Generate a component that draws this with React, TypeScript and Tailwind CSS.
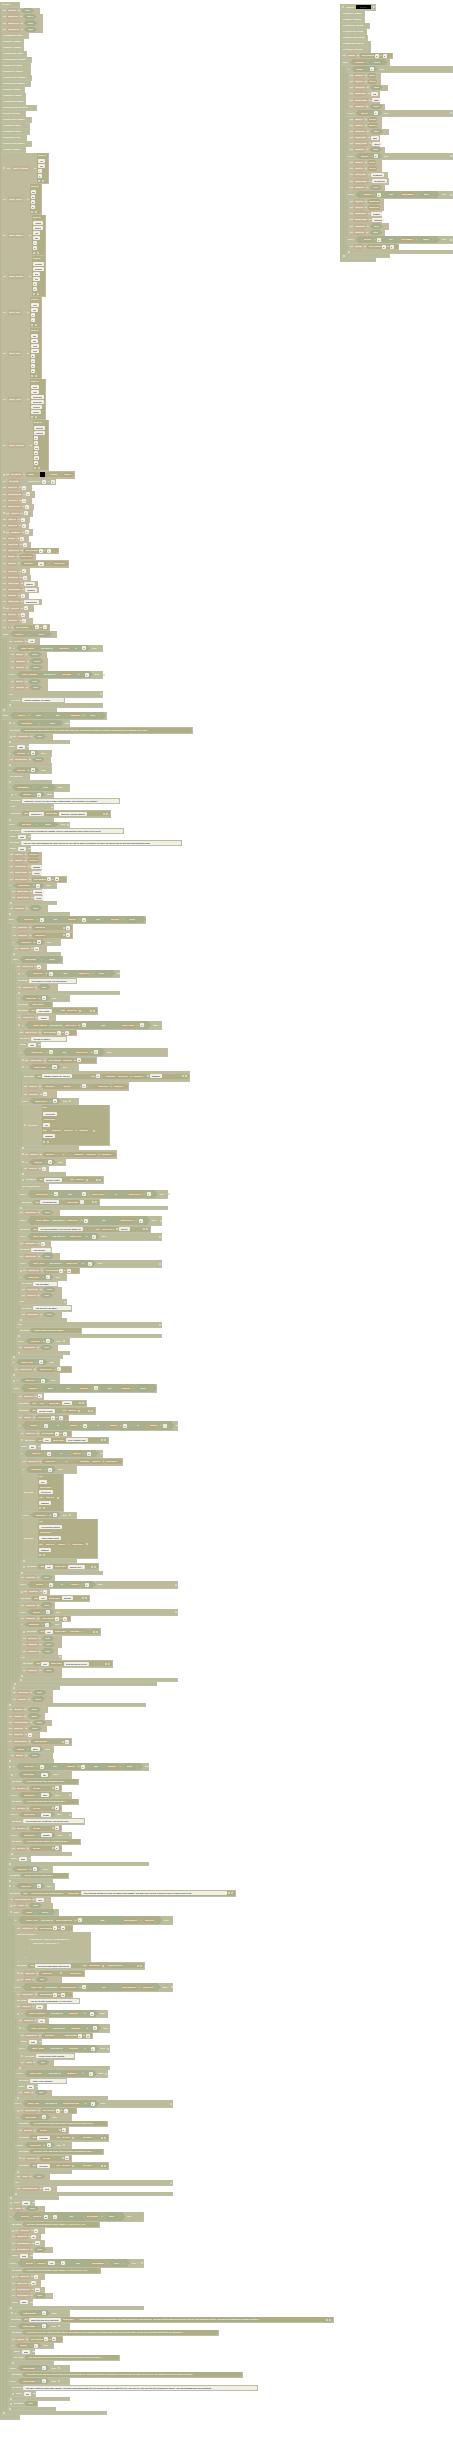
import React from "react";

/* One block per line: top, left, right, then the block's parts.
   [x] variable menu   (x) reporter   {x} editable field   "x" text reporter
   ‹ › condition       « » operator   ~ stretch            A<n> stacked value list */
const MAIN = `
2 0 20 on start
8 1 40 set [finalHIT] to ‹true›
14 1 43 set [deadHero] to ‹false›
20 1 43 set [startedHIT] to ‹false›
27 1 43 set [finalHERO] to ‹false›
33 1 29 let mobname: string
39 1 24 let mobXP: number
45 1 24 let mobHP: number
51 1 27 let mobNAME: string
57 1 32 let mobChance: number
63 1 31 let playerATT: string
69 1 31 let playerXP: number
75 1 32 let playerATTK: number
81 1 31 let playerRUN: number
87 1 25 let mobID: number
93 1 26 let mobDIE: number
99 1 26 let mobFLEE: number
105 1 37 let playerRestKeep: string
111 1 26 let ITEM: boolean
117 1 32 let playerRest: number
123 1 30 let forgive1: string
129 1 30 let forgive2: string
135 1 27 let MaxDance: any
141 1 32 let playerLast: number
147 1 26 let BigHIT: number
153 1 49 A37 - set [player_confirm] ~ to|array of|{Yes}|{yes}|{Y}|{y}|- +
184 1 42 A30 set [player_deny] ~ to|array of|{No}|{no}|{N}|{n}|- +
215 1 46 A32 set [player_attack] ~ to|array of|{Attack}|{attack}|{Atk}|{atk}|{A}|{a}|- +
256 1 46 A32 set [player_defend] ~ to|array of|{Defend}|{defend}|{Def}|{def}|{D}|{d}|- +
297 1 42 A30 set [player_flee] ~ to|array of|{Flee}|{flee}|{F}|{f}|- +
328 1 42 A30 set [player_eat] ~ to|array of|{Eat}|{eat}|{Heal}|{heal}|{E}|{e}|{H}|{h}|- +
379 1 46 A30 set [player_rest] ~ to|array of|{Rest}|{rest}|{Scavenge}|{scavenge}|{Search}|{search}|- +
420 1 49 A33 set [player_explore] ~ to|array of|{Explore}|{explore}|{X}|{x}|{Go}|{go}|{On}|{on}|- +
471 1 75 - set [my_sprite] to «* sprite ~ ■ ~ of kind ~ (Player)»
479 1 56 P set [my_sprite] ~ position to x {0} y {0}
485 1 32 set [playerXP] to {0}
491 1 35 set [playerMaxHP] to {0}
498 1 32 set [playerHP] to {0}
504 1 34 set [playerATTK] to {1}
510 1 33 - set [mobXP] to {0}
517 1 30 set [mobHP] to {0}
523 1 29 set [mobATT] to {1}
529 1 33 - set [mobDEF] to {0}
536 1 29 set [mobID] to {0}
542 1 31 set [mobFLEE] to {1}
548 1 59 set [mobDANC] to «* pick random {0} to {4}»
554 1 36 set [mobID] to (mobDANC)
560 1 69 set [mobHP] to «* (intensity) ~ {1.5} ~ × ~ (mobDANC)»
568 1 30 set [turnsHIT] to {0}
575 1 31 set [turnsRUN] to {0}
581 1 38 set [mobNAME] to {Zombie}
587 1 39 set [mobNAMES] to {Zombies}
593 1 29 set [mobDIE] to {1}
599 1 42 set [mobNAME] to {placeholder}
605 1 34 - set [turnHIT] to {0}
612 1 29 set [timeHIT] to {0}
618 1 33 set [mobRUN] to {0}
624 1 50 set [i] to «* pick random ~ {0} to {4}»
631 1 57 while ‹42 (finalHIT) = ‹false› ›
638 7 40 set [decision] to {Yes}
645 7 103 - if ‹74 (player_deny) find index of (decision) ≥ {0} › then
652 9 47 set [BigHIT] to ‹false›
658 9 48 set [BigWord] to ‹false›
665 9 48 set [finalHIT] to ‹false›
671 7 103 else if ‹76 (player_confirm) find index of (decision) ≥ {0} › then ~ +
679 9 48 set [BigHIT] to ‹true›
685 9 48 set [finalHIT] to ‹true›
691 7 103 else ~ +
698 9 65 say string {*Invalid response, try again.}
703 7 103 .
708 1 57 .
712 1 107 while ‹96 ‹(BigHIT) = ‹false› › and ‹(BigStory) ≠ ‹true› › ›
720 7 70 - if ‹47 (failedIntro) = ‹false› › then
727 8 193 say string "*You are alone with nowhere to call a small town with little light and the sounds of creatures surrounding you. Nothing is the best."
734 8 53 - set [failedIntro] to ‹true›
740 7 70 .
744 7 29 pause {2000} ms
750 7 52 if ‹(BPText) ≥ {30}› then
757 8 51 set [BPItemFind] to ‹true›
763 7 52 .
767 7 52 if ‹(BPText) ≥ {30}› then
774 8 30 call newGold
780 7 52 .
784 7 70 if ‹44 (BPItemBuy) = ‹false› › then
792 9 54 - if ‹(mobXP) > {0}› then
798 9 120 say string {*Suddenly, a voice yell out of some village nearby. They appears very danger!}
804 9 54 else ~ +
810 9 111 say string «* join {Suddenly, a} (mobNAME) {appears, looking danger!} ~ - + »
818 7 54 .
822 7 70 else if ‹42 (hereText) = ‹false› › then +
828 8 124 say string {*As you travel through the swamp, you see light moving from a cabin in the forest.}
834 8 31 pause {3000} ms
840 8 182 say string {*You see little flash towards the light, only to be very late to notice it from the fire tenly, as you are too far too busy and a thunder god!}
846 8 31 pause {3000} ms
852 8 42 set [mobXP] to (forestXP)
858 8 42 set [mobHP] to (forestHP)
864 8 42 set [mobNAME] to {Swamp}
870 8 41 set [mobNAMES] to {Slime}
876 8 67 set [turnChance] to «* pick random {0} to {10}»
883 8 57 if ‹(turnChance) ≥ {9}› then
889 10 42 set [mobNAME] to {Swamp}
895 10 43 set [mobNAMES] to {Slime}
901 8 57 .
905 8 48 set [hereText] to ‹true›
912 7 70 .
916 7 146 while ‹130 ‹(playerHP) > {0}› and ‹(mobHP) > {0}› and ‹(finished) = ‹false› › ›
924 11 73 set [mobTurn] to «* (mobTurn) ~ + {1}»
932 11 73 set [mobTurn] to «* (mobTurn) ~ + {1}»
939 11 61 if ‹(mobTurn) ≥ {10}› then
946 13 47 set [mobTurn] to {10}
952 11 61 .
956 11 63 while ‹43 (playerRUN) = ‹false› ›
964 15 47 set [playerATT] to {0}
970 16 120 - if ‹90 ‹(playerXP) ≥ {0}› and ‹(startHero) = ‹false› › › then
978 16 77 say string {*The slimes lie beside you and shout!}
984 16 58 set [startHero] to ‹true›
991 16 120 .
995 16 70 if ‹(playerHP) ≥ {0}› then
1002 16 53 say string "*What now?"
1007 16 98 say string «* join {Your Health:} ~ join (playerHP) + ~ - + »
1015 16 56 set [playerATT] to {Attack}
1021 16 162 - if ‹126 ‹(player_attack) find index of (playerATT) ≥ {0}› and ‹(playerATTK) > {0}› › then
1030 18 77 set [playerATTK] to «* pick random {0} to {3}»
1036 18 67 say string {*Rolling for attack…}
1042 18 41 pause {1000} ms
1048 18 168 if ‹82 ‹(playerATTK) > {0}› and ‹(playerATTK) ≤ {6}› › then
1057 20 97 - set [playerATTK] to «* pick random (mobTurn) to {10}»
1064 20 79 - if ‹(playerATTK) = {10}› then
1071 22 190 say string «* join {Wham! Critical Hit! You did} ~ join {2} × «(intensity) (playerHP) - (mobDEF)» + {damage!} ~ - + »
1082 22 129 set [mobHP] to «* (intensity) ~ (mobHP) ~ - {2} × ~ «(playerHP) - (mobDEF)» »
1091 22 57 set [mobTurn] to {0}
1098 20 79 else if ‹(playerATTK) > {10}› then +
1105 22 110 A42 - say string|join|{You hit the}|(mobNAME)|{for}|join «(intensity) (playerHP) - (mobDEF)» +|{damage!}|- +
1146 20 79 .
1150 20 117 - set [mobHP] to «* (mobHP) ~ - ~ «(intensity) (playerHP) - (mobDEF)» »
1159 20 66 - if ‹(mobHP) < {0}› then
1166 22 49 set [mobHP] to {0}
1172 20 66 .
1176 20 104 - say string «* join {Enemy Health:} ~ join (mobHP) + ~ - + »
1184 20 49 call checkplayerXP
1190 18 168 else if ‹130 ‹(playerATTK) > {3}› and ‹{0} < (playerATTK)› or ‹(playerATTK) = {1}› › then ~ +
1199 20 100 say string «* join {You missed the} ~ (mobNAME) {…} ~ - + »
1206 18 168 .
1210 18 60 set [playerRUN] to ‹true›
1216 18 162 else if ‹122 ‹(player_attack) find index of (playerATT) ≥ {0}› and ‹(playerATTK) = {0}› › then ~ +
1226 18 151 say string «* join {You can not attack! You can only attack for} ~ join (playerATTK) + {turn(s)!} ~ - + »
1233 18 162 else if ‹72 (player_defend) find index of (playerATT) ≥ {0}› then ~ +
1241 18 51 set [playerDEF] to {3}
1247 18 52 say string {*You defend!}
1253 18 60 set [playerRUN] to ‹true›
1260 18 162 else if ‹68 (player_flee) find index of (playerATT) ≥ {0}› then ~ +
1268 18 80 - set [playerRUN] to «* pick random {0} to {10}»
1274 18 67 if ‹(playerRUN) > {7}› then
1281 20 58 say string {*You ran away!}
1287 20 62 set [playerRUN] to ‹true›
1293 20 62 set [finished] to ‹true›
1299 18 67 else ~ +
1305 20 72 say string {*You failed to run away…}
1312 20 62 set [playerRUN] to ‹true›
1318 18 67 .
1322 16 162 else ~ +
1328 18 82 say string "*Invalid input! Please try again."
1334 16 162 .
1338 16 70 else if ‹(playerHP) ≤ {0}› then +
1345 17 58 set [playerRUN] to ‹true›
1351 16 70 .
1355 11 63 .
1359 11 60 if ‹(playerATTK) > {0}› then
1366 13 72 set [playerATTK] to «* (playerATTK) - {1}»
1373 11 60 .
1378 11 60 - if ‹(playerHP) > {0}› then
1384 12 157 while ‹136 ‹(mobHIT) = ‹false› › and ‹(mobHP) > {0}› and ‹(finished) = ‹false› › ›
1393 17 44 set [mobATT] to {0}
1400 17 87 say string «* join "The" (mobNAME) {'s turn!} ~ - + »
1407 17 96 say string «* join {Enemy Health:} ~ join (mobHP) + ~ - + »
1415 17 69 set [mobID] to «* pick random {0} to {6}»
1421 17 178 if ‹152 ‹(mobID) = {1}› or ‹(mobID) = {2}› or ‹(mobID) = {3}› or ‹(mobID) = {4}› › then
1431 19 72 set [mobATT] to «* pick random {0} to {6}»
1437 19 109 - say string «* join {The} (mobNAME) {tries to attack you!} ~ - + »
1444 19 41 pause {500} ms
1450 19 103 if ‹74 ‹(mobATT) > {0}› or ‹(mobHIT) < {0}› › then
1458 21 123 set [playerHP] to «* (playerHP) ~ - ~ «(intensity) (mobHP) - (playerDEF)» »
1466 21 77 if ‹(playerDEF) > {0}› then
1474 22 64 A38 say string|join|{The}|(mobNAME)|{hit you for}|join (mobHP) +|{damage!}|- +
1512 21 77 else if ‹(playerDEF) ≥ {0}› then +
1519 22 98 A38 say string|join|{You defend from the}|(mobNAME)|{, only letting it deal}|join (mobHP) (integer) × (playerDEF) +|{damage!}|- +
1559 21 77 .
1563 21 99 - say string «* join {The} (mobNAME) {missed you…} ~ - + »
1571 19 103 .
1575 19 55 set [mobRUN] to ‹true›
1581 18 178 else if ‹68 ‹(mobID) = {5}› or ‹(mobID) = {6}› › then ~ +
1589 19 50 - set [mobDEF] to {3}
1595 19 90 say string «* join {The} (mobNAME) {defends} ~ - + »
1602 19 55 set [mobRUN] to ‹true›
1609 18 178 else if ‹(mobID) = {7}› then ~ +
1616 19 71 set [mobRUN] to «* pick random {0} to {6}»
1622 19 62 if ‹(mobRUN) > {4}› then
1628 21 101 - say string «* join {The} (mobNAME) "ran away…" ~ - + »
1636 21 62 set [finished] to ‹true›
1642 21 62 set [mobRUN] to ‹true›
1648 21 58 set [mobflee] to ‹true›
1655 19 62 else ~ +
1660 21 113 say string «* join {The} (mobNAME) {tried and failed to flee!} ~ - + »
1668 21 62 set [mobRUN] to ‹true›
1674 19 62 .
1678 18 178 .
1682 12 157 .
1686 11 60 .
1690 11 53 set [playerHIT] to ‹false›
1696 11 53 set [mobHIT] to ‹false›
1703 7 146 .
1707 7 48 set [finished] to ‹false›
1713 7 45 set [mobflee] to ‹false›
1720 7 52 set [mobHideStart] to ‹false›
1726 7 47 set [mobRUN] to ‹false›
1732 7 40 set [mobTurn] to {0}
1738 7 72 set [battleRound] to «* (battleRound) ~ + {1}»
1746 7 54 if ‹(mobID) = {Boss} › then
1753 9 53 set [BigHIT] to ‹true›
1759 7 54 .
1763 7 149 - if ‹127 ‹(playerHP) > {0}› and ‹(mobHP) ≤ {0}› and ‹(mobflee) = ‹false› › › then
1771 9 72 - if ‹(mobNAME) = {bat}› then
1779 10 79 say string "*You defeated the bat! You gained 5 BP!"
1785 10 62 set [BPText] to «* (BPText) ~ + {5}»
1792 9 72 else if ‹(mobNAME) = {Wolf}› then ~ +
1799 10 79 say string "*You defeated the wolf! You gained 5 BP!"
1805 10 62 set [BPText] to «* (BPText) ~ + {5}»
1812 9 72 else if ‹(mobNAME) = {scrawl}› then ~ +
1818 10 85 say string {*You defeated the scrawling! You gained 5 BP!}
1825 10 62 set [BPText] to «* (BPText) ~ + {5}»
1832 9 72 else if ‹(mobNAME) = {zombie}› then ~ +
1839 10 81 say string "*You defeated the zombie! You gained 5 BP!"
1845 10 62 set [BPText] to «* (BPText) ~ + {5}»
1852 9 72 .
1856 9 31 pause {2000} ms
1862 7 149 .
1866 7 53 if ‹(playerHP) ≤ {0}› then
1873 8 69 say string "*You are dead! Try again later!"
1879 7 53 .
1883 7 55 - if ‹(playerHP) > {0}› then
1890 8 236 say string «* join "You are tired your enemies with a" (mobNAME) {*, you rest and eat and feel tired by today in the swamp. You may rest in a bed, search for food, or gain sleep for BP.} - + »
1897 8 51 set [playerRestKeep] to {Rest}
1903 8 53 - set [ITEM] to ‹false›
1909 8 59 - while ‹(ITEM) = ‹false› ›
1916 13 173 if ‹144 ‹(player_rest) find index of (playerRestKeep) ≥ {0}› and ‹(playerMaxHP) > (playerHP)› › then
1925 15 73 set [playerRest] to «* pick random {0} to {10}»
1932 15 91 #
1962 15 145 say string «* join {You slept comfortably and healed} ~ join (playerRest) + "health back to!" ~ - + »
1970 15 85 - set [playerHP] to «* (playerHP) ~ + ~ (playerRest)»
1977 15 62 - set [ITEM] to ‹true›
1983 13 173 else if ‹138 ‹(player_rest) find index of (playerRestKeep) ≥ {0}› and ‹(playerMaxHP) = (playerHP)› › then ~ +
1992 15 73 set [playerRest] to «* pick random {0} to {10}»
1998 15 80 say string {*You are already at maximum! Are you sure?}
2004 15 47 set [forgive1] to {Yes}
2010 15 108 - if ‹74 (player_confirm) find index of (forgive1) ≥ {0}› then
2018 17 49 set [forgive2] to {Yes}
2024 17 110 - if ‹75 (player_confirm) find index of (forgive2) ≥ {0}› then
2033 19 93 set [MaxDance] to «* (intensity) ~ pick random {0} to {10}»
2039 19 42 pause {1000} ms
2045 17 110 else if ‹72 (player_deny) find index of (forgive2) ≥ {0}› then +
2053 19 75 - say string {*Please decide with confirm.}
2060 19 54 set [ITEM] to ‹true›
2066 17 110 .
2070 15 108 else if ‹72 (player_deny) find index of (forgive1) ≥ {0}› then +
2078 17 67 say string {*Okay! Let's continue.}
2084 17 38 pause {500} ms
2090 17 52 set [ITEM] to ‹true›
2096 15 108 .
2100 13 173 else if ‹76 (player_rest) find index of (playerRestKeep) ≥ {0}› then ~ +
2108 15 77 - set [playerLast] to «* pick random {0} to {7}»
2114 15 72 if ‹(playerLast) > {3}› then
2121 17 108 say string "*You scavenged around and found enough food to gain a 5 BP!"
2127 17 69 set [BPText] to «* (BPText) ~ + {5}»
2134 17 109 say string «* join {You have} ~ join (BPText) + ~ "BP total." ~ - + »
2142 15 72 else if ‹(playerLast) ≤ {3}› then +
2149 17 104 say string "*You were lucky and found a piece of food, you gained 10 BP!"
2155 17 72 - set [BPText] to «* (BPText) ~ + {10}»
2162 17 109 say string «* join {You have} ~ join (BPText) + ~ "BP total." ~ - + »
2170 15 72 .
2174 15 50 set [ITEM] to ‹true›
2180 13 173 else ~ +
2186 15 57 set [playerRestKeep] to {Rest}
2192 13 173 .
2196 8 59 .
2200 8 35 - pause {1000} ms
2206 8 45 set [ITEM] to ‹false›
2212 8 144 if ‹112 ‹(BPText) (integer) {20} = {0}› and ‹(BPItemBuy) = ‹false› › › then
2222 10 100 say string "*You have achieved Boots Gold to Attack 1+1 =30 HP & 2 = 10!"
2228 10 45 - set [playerXP] to {5}
2234 10 41 set [playerHP] to {30}
2240 10 45 set [playerMaxHP] to {30}
2247 10 53 set [BPItemBuy] to ‹true›
2253 10 33 pause {3000} ms
2259 8 144 else if ‹112 ‹(BPText) (integer) {100} = {0}› and ‹(BPItemBuy) = ‹true› › › then ~ +
2268 10 101 say string "*You have achieved Boots Gold to Attack 1+1 =30 HP & 3+2 = 10!"
2274 10 45 - set [playerXP] to {9}
2280 10 41 set [playerHP] to {50}
2287 10 45 set [playerMaxHP] to {50}
2293 10 53 set [BPItemBuy] to ‹true›
2299 10 33 pause {3000} ms
2306 8 144 .
2310 9 70 - if ‹(battleRound) = {1}› then
2317 9 334 say string «* join {When the sun feels light with} (mobNAME) "*, you look around at your surroundings. It is a dark forest with eyes behind it. You find yourself with one trail you need to come out above ahead. You begin by heading to a certain direction." - + »
2323 8 70 else if ‹(battleRound) = {3}› then +
2330 10 219 say string "*You begin to feel the light out of the places. The number of one can wander by hungry and losing a trail in the other, you do the trick and not to get to the darkness…"
2336 10 63 set [BigRN] to «* pick random {0} to {10}»
2343 10 54 if ‹(BigRN) > {5}› then
2349 12 35 pause {3000} ms
2355 12 120 say string "*You hear a of you see one in the whole way going through out to the places…"
2361 10 54 .
2365 8 70 else if ‹(battleRound) = {6}› then +
2372 10 243 say string "*You begin to feel stronger as you travel through these travels. You don't know why you wish on a rush and dare to return, but you do. The continue on with the trips of sorrow."
2378 8 70 else if ‹(battleRound) = {9}› then +
2385 10 258 say string {*You have reached a dark town cabinet. You don't understand what they are saying or when or what they are, but you feel you can hear the scraping the moon. You find inhuman dark deep pointing.}
2391 10 36 - pause {500} ms
2397 8 70 .
2401 8 38 - say string "*end"
2407 7 56 .
2411 1 107 .
2415 0 20 .
2420 0 0 .
`;

const SIDE = `
4 0 36 - function ▬ +
11 1 25 let mobHIT: number
17 1 25 let mobXP: number
23 1 30 let mobRUN: boolean
29 1 27 let mobNAME: string
35 1 28 let mobNAMES: string
41 1 31 let mobHIDE: boolean
47 1 31 let mobflee: boolean
53 1 53 set [mobID] to «* pick random {0} to {3}»
59 1 50 while ‹38 (finished) = ‹false› ›
66 6 113 if ‹(mobID) = {0}› then
73 8 41 set [mobXP] to (batXP)
79 8 41 set [mobHP] to (batHP)
85 8 48 set [mobHIDE] to ‹false›
91 8 40 set [mobNAME] to {bat}
97 8 40 set [mobNAMES] to {Bats}
104 8 45 set [mobRUN] to ‹false›
110 6 113 else if ‹(mobID) = {1}› then ~ +
117 8 42 set [mobXP] to (wolfXP)
123 8 42 set [mobHP] to (wolfHP)
129 8 49 set [mobHIDE] to ‹false›
135 8 40 set [mobNAME] to {Wolf}
141 8 40 set [mobNAMES] to {Wolfs}
147 8 45 set [mobRUN] to ‹true›
153 6 113 else if ‹(mobID) = {2}› then ~ +
160 8 42 set [mobXP] to (scrXP)
166 8 42 set [mobHP] to (scrHP)
172 8 48 set [mobNAME] to {scrawling}
178 8 49 set [mobNAMES] to {Scrawlings}
185 8 45 set [mobRUN] to ‹true›
191 6 113 else if ‹84 ‹(mobID) = {3}› and ‹(BPItemBuy) = ‹true› › › then ~ +
199 8 44 set [mobXP] to (zombieXP)
205 8 44 set [mobHP] to (zombieHP)
211 8 42 set [mobNAME] to {zombie}
217 8 42 set [mobNAMES] to {Zombies}
223 8 49 set [mobHIDE] to ‹true›
230 8 45 set [mobRUN] to ‹true›
236 6 113 else if ‹84 ‹(mobID) = {3}› and ‹(BPItemBuy) = ‹false› › › then ~ +
244 8 59 set [mobID] to «* pick random {0} to {3}»
250 6 113 .
254 1 50 .
258 0 36 .
262 0 0 .
`;

const COMMENT = [
  ["pl-0", "function run(more) {"],
  ["pl-3", "if (playerRest + playerHP > playerMaxHP) {"],
  ["pl-4", "playerRest = playerRest - 1"],
  ["pl-3", "}"],
  ["pl-0", ""],
  ["pl-2", "}"],
];

const TOKEN =
  /"[^"]*"|\{[^}]*\}|\[[^\]]*\]|\([^)]*\)|‹\d*|›|«\*?|»|[^\s"{}[\]()‹›«»]+/g;

const HEX =
  "[clip-path:polygon(3px_0,calc(100%-3px)_0,100%_50%,calc(100%-3px)_100%,3px_100%,0_50%)]";

function Menu({ name, tone }: { name: string; tone: string }) {
  return (
    <span className={`flex h-[5px] shrink-0 items-center ${tone}`}>
      <select
        aria-label={name}
        className="field-sizing-content h-[3px] appearance-none bg-transparent p-0 leading-[3px]"
      >
        <option>{name}</option>
      </select>
      <span className="leading-[3px]">▾</span>
    </span>
  );
}

function Field({ value, grow }: { value: string; grow: boolean }) {
  return (
    <input
      aria-label="value"
      defaultValue={value}
      className={`field-sizing-content h-[4px] min-w-[4px] rounded-[1px] bg-[#f1efe6] py-0 leading-[4px] text-[#3f4670] ${
        grow ? "flex-1" : "shrink-0"
      } ${value.length > 2 ? "px-[2px]" : "px-[1px]"}`}
    />
  );
}

function parse(tokens: string[], depth: number): React.ReactNode[] {
  const out: React.ReactNode[] = [];
  let key = 0;
  while (tokens.length) {
    const t = tokens.shift() as string;
    key += 1;
    if (t === "›" || t === "»") return out;
    if (t[0] === "‹") {
      const width = t.length > 1 ? Number(t.slice(1)) : undefined;
      const wordy = /^(true|false)$/.test(tokens[0]);
      const inner = wordy ? null : parse(tokens, depth + 1);
      let word = "";
      if (wordy) {
        word = tokens.shift() as string;
        tokens.shift();
      }
      out.push(
        <span
          key={key}
          style={width ? { width } : undefined}
          className={`flex shrink-0 items-center justify-between gap-[2px] self-stretch ${HEX} ${
            wordy ? "bg-[#a6ae8b] px-[4px]" : depth ? "bg-[#adb18a] px-[3px]" : "bg-[#a8af8c] px-[4px]"
          }`}
        >
          {wordy ? <Menu name={word} tone="" /> : inner}
        </span>,
      );
    } else if (t[0] === "«") {
      const grow = t === "«*";
      out.push(
        <span
          key={key}
          className={`flex h-[5px] items-center gap-[1px] rounded-[2px] border-x border-[#b8a587] bg-[#b1af88] px-[1px] ${
            grow ? "flex-1" : "shrink-0"
          }`}
        >
          {parse(tokens, depth + 1)}
        </span>,
      );
    } else if (t[0] === "{") {
      const raw = t.slice(1, -1);
      const grow = raw[0] === "*";
      out.push(<Field key={key} value={grow ? raw.slice(1) : raw} grow={grow} />);
    } else if (t[0] === "[") {
      out.push(
        <Menu key={key} name={t.slice(1, -1)} tone="rounded-[1px] border border-[#c3ac92] bg-[#bdb896]" />,
      );
    } else if (t[0] === "(") {
      out.push(
        <Menu key={key} name={t.slice(1, -1)} tone="rounded-[2px] border border-[#b6a682] bg-[#b1ab82]" />,
      );
    } else if (t[0] === '"') {
      const grow = t[1] === "*";
      out.push(
        <span
          key={key}
          className={`flex h-[5px] items-center rounded-[2px] bg-[#afad84] px-[2px] ${grow ? "flex-1" : "shrink-0"}`}
        >
          “{t.slice(grow ? 2 : 1, -1)}”
        </span>,
      );
    } else if (t === "~") {
      out.push(<span key={key} className="flex-1" />);
    } else if (t === "-" && depth > 0 && tokens[0] !== "+") {
      out.push(<span key={key}>-▾</span>);
    } else if (t === "+" || t === "-") {
      out.push(
        <button
          key={key}
          type="button"
          aria-label={t === "+" ? "add" : "remove"}
          className="flex size-[2px] shrink-0 items-center justify-center rounded-full bg-[#e0e0ce] text-[#bcbc9b]"
        >
          {t}
        </button>,
      );
    } else if (t === "■") {
      out.push(<span key={key} className="size-[5px] shrink-0 bg-black" />);
    } else if (t === "▬") {
      out.push(
        <input
          key={key}
          aria-label="function name"
          defaultValue="newGold"
          className="h-[4px] w-[15px] bg-black px-[4px] py-0 leading-[4px] text-[#5a5f80]"
        />,
      );
    } else {
      out.push(<span key={key}>{t}</span>);
    }
  }
  return out;
}

const tokensOf = (text: string) =>
  (text.match(TOKEN) ?? []).reduce<string[]>((list, t) => {
    const last = list[list.length - 1];
    const plain = /^[a-z]\w*:?$/i;
    if (last && plain.test(t) && !/^(true|false)$/.test(t) && /^[a-z][\w: ]*$/i.test(last)) {
      list[list.length - 1] = `${last} ${t}`;
    } else {
      list.push(t);
    }
    return list;
  }, []);

type Line = { top: number; left: number; right: number; body: string };

function Block({ line, height }: { line: Line; height: number }) {
  const { left, right } = line;
  let body = line.body;
  let skin = "gap-[2px] border-[#b9c0ab] bg-[#bcbc9b]";
  if (/^(- |A\d+ (- )?)?set /.test(body)) skin = "gap-[1px] border-[#c8b5a2] bg-[#bebc9c]";
  if (body.startsWith("P ")) {
    skin = "gap-[2px] border-[#b4b8ae] bg-[#bcbd9f]";
    body = body.slice(2);
  }
  const panel = /^A(\d+) ([^|]*)\|(.*)$/.exec(body);
  let content: React.ReactNode;
  if (body === ".") {
    content = left > 0 ? <span className="size-[2px] rounded-full bg-[#e4e4d4]" /> : null;
  } else if (body === "#") {
    content = (
      <div className="flex flex-1 flex-col justify-between self-stretch py-[1px]">
        {COMMENT.map(([pad, text], i) => (
          <span key={i} className={`h-[4px] ${pad}`}>
            {text}
          </span>
        ))}
      </div>
    );
  } else if (panel) {
    content = (
      <>
        <div className="flex flex-1 items-center gap-[2px]">{parse(tokensOf(panel[2]), 0)}</div>
        <div
          style={{ width: right - Number(panel[1]) - 1 }}
          className="flex shrink-0 flex-col justify-around self-stretch bg-[#b1af88] pl-[1px]"
        >
          {panel[3].split("|").map((part, i) => (
            <div key={i} className="flex h-[5px] items-center gap-[2px]">
              {parse(tokensOf(part), 0)}
            </div>
          ))}
        </div>
      </>
    );
  } else {
    content = parse(tokensOf(body), 0);
  }
  return (
    <div className="flex" style={{ height }}>
      <div
        style={{ width: left }}
        className="shrink-0 bg-[repeating-linear-gradient(90deg,#b1b794_0_1px,#b8b997_1px_3px)]"
      />
      <div
        style={{ width: right - left }}
        className={`flex shrink-0 items-center border-r border-b pl-[2px] ${skin}`}
      >
        {content}
      </div>
    </div>
  );
}

function Stack({ source }: { source: string }) {
  const lines: Line[] = source
    .trim()
    .split("\n")
    .map((row) => {
      const m = /^(\d+) (\d+) (\d+) (.*)$/.exec(row) as RegExpExecArray;
      return { top: +m[1], left: +m[2], right: +m[3], body: m[4] };
    });
  return (
    <div className="flex flex-col">
      {lines.slice(0, -1).map((line, i) => (
        <Block key={line.top} line={line} height={lines[i + 1].top - line.top} />
      ))}
    </div>
  );
}

export default function App() {
  return (
    <main className="flex min-h-screen items-start justify-between overflow-hidden bg-white pb-[22px] font-['Liberation_Sans',sans-serif] text-[2px] leading-[3px] font-bold whitespace-nowrap text-[#fafaf4]">
      <section aria-label="on start" className="w-0 flex-1 pt-[2px]">
        <Stack source={MAIN} />
      </section>
      <section aria-label="function" className="w-[113px] shrink-0 pt-[4px]">
        <Stack source={SIDE} />
      </section>
    </main>
  );
}
